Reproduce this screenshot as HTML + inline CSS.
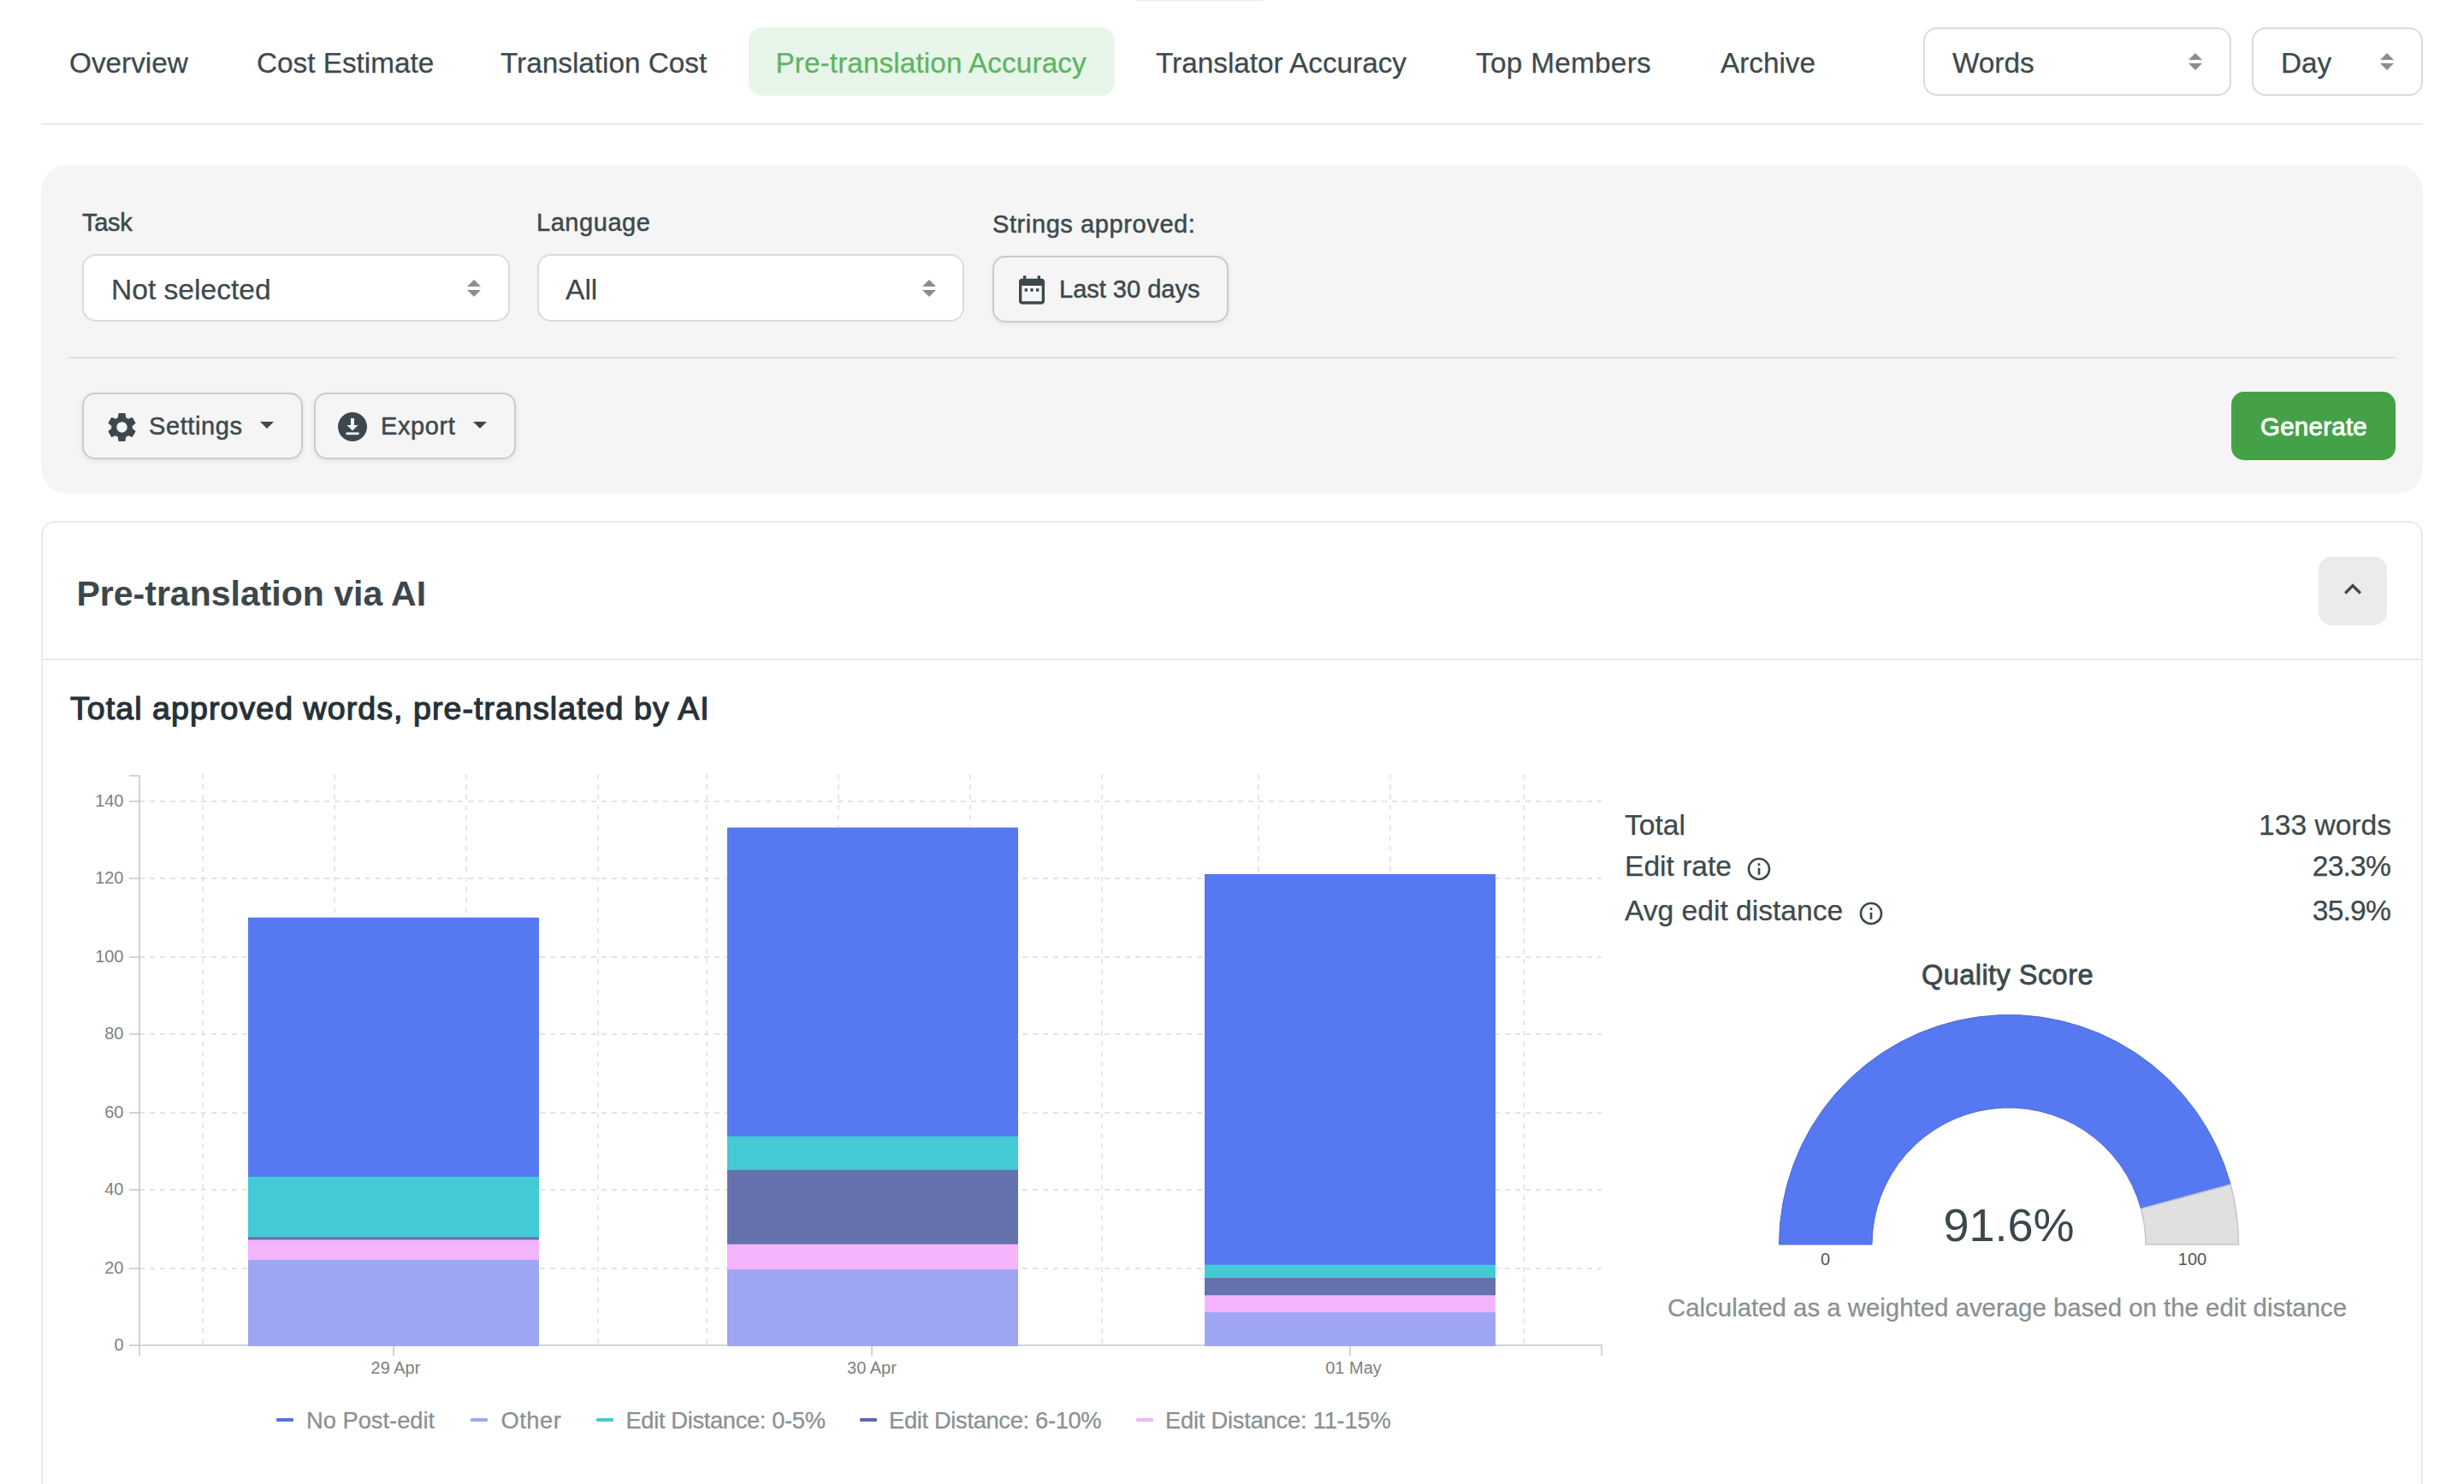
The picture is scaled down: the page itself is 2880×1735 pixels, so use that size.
<!DOCTYPE html>
<html lang="en">
<head>
<meta charset="utf-8">
<title>Pre-translation Accuracy</title>
<style>
html,body{margin:0;padding:0;background:#fff;}
body{width:2880px;height:1735px;position:relative;overflow:hidden;font-family:"Liberation Sans",sans-serif;color:#3d494d;}
@media (max-width:1500px){html{zoom:.5;}}
.abs{position:absolute;}
.t{position:absolute;white-space:nowrap;line-height:1;margin:0;font-weight:400;-webkit-text-stroke:0.25px currentColor;}
.tab{font-size:33.3px;top:57px;}
.med{-webkit-text-stroke:0.5px currentColor;letter-spacing:0.6px;}
.lg{font-size:27.3px;top:1647px;color:#8a9093;}
.mk{position:absolute;top:1658px;width:20px;height:4px;border-radius:1px;}
.box{position:absolute;box-sizing:border-box;}
.sel{background:#fff;border:2px solid #dbdbdb;border-radius:16px;}
.btn{background:#f5f5f5;border:2px solid #cbcbcb;border-radius:15px;box-shadow:0 2px 6px rgba(0,0,0,.07);}
.arr{position:absolute;width:16px;height:20px;}
</style>
</head>
<body>

<!-- top sliver -->
<div class="box" style="left:1328px;top:0;width:148px;height:1px;background:#ececec;"></div>

<!-- tabs -->
<div class="box" style="left:875px;top:32px;width:428px;height:80px;border-radius:16px;background:#e8f5e9;"></div>
<span class="t tab" id="tb1" style="left:81px;">Overview</span>
<span class="t tab" id="tb2" style="left:300px;">Cost Estimate</span>
<span class="t tab" id="tb3" style="left:585px;">Translation Cost</span>
<span class="t tab" id="tb4" style="left:906.5px;letter-spacing:0.1px;color:#5cb561;">Pre-translation Accuracy</span>
<span class="t tab" id="tb5" style="left:1351px;">Translator Accuracy</span>
<span class="t tab" id="tb6" style="left:1725px;letter-spacing:0.3px;">Top Members</span>
<span class="t tab" id="tb7" style="left:2011px;">Archive</span>

<div class="box sel" style="left:2248px;top:32px;width:360px;height:80px;"></div>
<span class="t tab" id="tb8" style="left:2282px;">Words</span>
<svg class="arr" style="left:2558px;top:62px;" viewBox="0 0 16 20"><path d="M8 0 L16 8 H0 Z M0 12 H16 L8 20 Z" fill="#8a8e90"/></svg>
<div class="box sel" style="left:2632px;top:32px;width:200px;height:80px;"></div>
<span class="t tab" id="tb9" style="left:2666px;">Day</span>
<svg class="arr" style="left:2782px;top:62px;" viewBox="0 0 16 20"><path d="M8 0 L16 8 H0 Z M0 12 H16 L8 20 Z" fill="#8a8e90"/></svg>

<div class="box" style="left:48px;top:144px;width:2784px;height:2px;background:#e8e8e8;"></div>

<!-- filter panel -->
<div class="box" style="left:48px;top:193px;width:2784px;height:384px;border-radius:30px;background:#f5f5f5;"></div>
<span class="t med" id="lb1" style="left:96px;top:246px;font-size:29px;letter-spacing:-0.3px;">Task</span>
<span class="t med" id="lb2" style="left:627px;top:246px;font-size:29px;letter-spacing:0.55px;">Language</span>
<span class="t med" id="lb3" style="left:1160px;top:248px;font-size:29px;">Strings approved:</span>

<div class="box sel" style="left:96px;top:297px;width:500px;height:79px;"></div>
<span class="t" id="sv1" style="left:130px;top:322px;font-size:33.6px;">Not selected</span>
<svg class="arr" style="left:546px;top:327px;" viewBox="0 0 16 20"><path d="M8 0 L16 8 H0 Z M0 12 H16 L8 20 Z" fill="#8a8e90"/></svg>
<div class="box sel" style="left:628px;top:297px;width:499px;height:79px;"></div>
<span class="t" id="sv2" style="left:661px;top:322px;font-size:33.6px;">All</span>
<svg class="arr" style="left:1078px;top:327px;" viewBox="0 0 16 20"><path d="M8 0 L16 8 H0 Z M0 12 H16 L8 20 Z" fill="#8a8e90"/></svg>

<div class="box btn" style="left:1160px;top:299px;width:276px;height:78px;"></div>
<svg class="abs" style="left:1186px;top:319px;width:40px;height:40px;" viewBox="0 0 24 24"><path fill="#3c484d" d="M9 11H7v2h2v-2zm4 0h-2v2h2v-2zm4 0h-2v2h2v-2zm2-7h-1V2h-2v2H8V2H6v2H5c-1.11 0-1.99.9-1.99 2L3 20c0 1.1.89 2 2 2h14c1.1 0 2-.9 2-2V6c0-1.1-.9-2-2-2zm0 16H5V9h14v11z"/></svg>
<span class="t med" id="bt1" style="left:1238px;top:324px;font-size:29px;letter-spacing:0;">Last 30 days</span>

<div class="box" style="left:80px;top:417px;width:2720px;height:2px;background:#dedede;"></div>

<div class="box btn" style="left:96px;top:459px;width:258px;height:78px;"></div>
<svg class="abs" style="left:121.5px;top:478.5px;width:41px;height:41px;" viewBox="0 0 24 24"><path fill="#3c484d" d="M19.14 12.94c.04-.3.06-.61.06-.94 0-.32-.02-.64-.07-.94l2.03-1.58a.49.49 0 0 0 .12-.61l-1.92-3.32a.488.488 0 0 0-.59-.22l-2.39.96c-.5-.38-1.03-.7-1.62-.94l-.36-2.54a.484.484 0 0 0-.48-.41h-3.84c-.24 0-.43.17-.47.41l-.36 2.54c-.59.24-1.13.57-1.62.94l-2.39-.96c-.22-.08-.47 0-.59.22L2.74 8.87c-.12.21-.08.47.12.61l2.03 1.58c-.05.3-.09.63-.09.94s.02.64.07.94l-2.03 1.58a.49.49 0 0 0-.12.61l1.92 3.32c.12.22.37.29.59.22l2.39-.96c.5.38 1.03.7 1.62.94l.36 2.54c.05.24.24.41.48.41h3.84c.24 0 .44-.17.47-.41l.36-2.54c.59-.24 1.13-.56 1.62-.94l2.39.96c.22.08.47 0 .59-.22l1.92-3.32c.12-.22.07-.47-.12-.61l-2.01-1.58zM12 15.6c-1.98 0-3.6-1.62-3.6-3.6s1.62-3.6 3.6-3.6 3.6 1.62 3.6 3.6-1.62 3.6-3.6 3.6z"/></svg>
<span class="t med" id="bt2" style="left:174px;top:484px;font-size:29px;">Settings</span>
<svg class="abs" style="left:304px;top:493px;width:16px;height:8px;" viewBox="0 0 16 8"><path d="M0 0H16L8 8Z" fill="#3c484d"/></svg>

<div class="box btn" style="left:367px;top:459px;width:236px;height:78px;"></div>
<svg class="abs" style="left:395px;top:482px;width:34px;height:34px;" viewBox="0 0 34 34"><circle cx="17" cy="17" r="17" fill="#3c484d"/><path d="M15 7h4v8h4.6L17 21.6 10.4 15H15z M9.5 23.5h15v2.8h-15z" fill="#f5f5f5"/></svg>
<span class="t med" id="bt3" style="left:445px;top:484px;font-size:29px;">Export</span>
<svg class="abs" style="left:553px;top:493px;width:16px;height:8px;" viewBox="0 0 16 8"><path d="M0 0H16L8 8Z" fill="#3c484d"/></svg>

<div class="box" style="left:2608px;top:458px;width:192px;height:80px;border-radius:15px;background:#44a148;"></div>
<span class="t" id="bt4" style="left:2642px;top:484px;font-size:29.5px;-webkit-text-stroke:0.9px currentColor;letter-spacing:0.25px;color:#fdfffd;">Generate</span>

<!-- card -->
<div class="box" style="left:48px;top:609px;width:2784px;height:1200px;border:2px solid #e9e9e9;border-radius:16px;background:#fff;"></div>
<span class="t" id="h1" style="-webkit-text-stroke:0;left:89.5px;top:674px;font-size:41px;font-weight:700;color:#3c474c;">Pre-translation via AI</span>
<div class="box" style="left:2710px;top:651px;width:80px;height:80px;border-radius:15px;background:#ebebeb;"></div>
<svg class="abs" style="left:2730px;top:669.3px;width:40px;height:40px;" viewBox="0 0 24 24"><path d="M12 8l-6 6 1.41 1.41L12 10.83l4.59 4.58L18 14z" fill="#3c484d"/></svg>
<div class="box" style="left:50px;top:770px;width:2780px;height:2px;background:#e8e8e8;"></div>
<span class="t" id="h2" style="left:82px;top:809.5px;font-size:37.5px;-webkit-text-stroke:1.25px currentColor;letter-spacing:1.08px;color:#263238;">Total approved words, pre-translated by AI</span>

<!-- CHART -->
<svg class="abs" id="chart" style="left:0;top:880px;width:1900px;height:855px;" viewBox="0 880 1900 855" font-family="Liberation Sans, sans-serif">
<line x1="237" y1="905" x2="237" y2="1572.8" stroke="#dcdcdc" stroke-width="1.3" stroke-dasharray="6 6"/>
<line x1="391" y1="905" x2="391" y2="1572.8" stroke="#dcdcdc" stroke-width="1.3" stroke-dasharray="6 6"/>
<line x1="545" y1="905" x2="545" y2="1572.8" stroke="#dcdcdc" stroke-width="1.3" stroke-dasharray="6 6"/>
<line x1="699" y1="905" x2="699" y2="1572.8" stroke="#dcdcdc" stroke-width="1.3" stroke-dasharray="6 6"/>
<line x1="826" y1="905" x2="826" y2="1572.8" stroke="#dcdcdc" stroke-width="1.3" stroke-dasharray="6 6"/>
<line x1="980" y1="905" x2="980" y2="1572.8" stroke="#dcdcdc" stroke-width="1.3" stroke-dasharray="6 6"/>
<line x1="1134" y1="905" x2="1134" y2="1572.8" stroke="#dcdcdc" stroke-width="1.3" stroke-dasharray="6 6"/>
<line x1="1288" y1="905" x2="1288" y2="1572.8" stroke="#dcdcdc" stroke-width="1.3" stroke-dasharray="6 6"/>
<line x1="1471" y1="905" x2="1471" y2="1572.8" stroke="#dcdcdc" stroke-width="1.3" stroke-dasharray="6 6"/>
<line x1="1625" y1="905" x2="1625" y2="1572.8" stroke="#dcdcdc" stroke-width="1.3" stroke-dasharray="6 6"/>
<line x1="1781" y1="905" x2="1781" y2="1572.8" stroke="#dcdcdc" stroke-width="1.3" stroke-dasharray="6 6"/>
<line x1="163" y1="1483.00" x2="1872" y2="1483.00" stroke="#dcdcdc" stroke-width="1.3" stroke-dasharray="6 6"/>
<line x1="163" y1="1391.00" x2="1872" y2="1391.00" stroke="#dcdcdc" stroke-width="1.3" stroke-dasharray="6 6"/>
<line x1="163" y1="1301.00" x2="1872" y2="1301.00" stroke="#dcdcdc" stroke-width="1.3" stroke-dasharray="6 6"/>
<line x1="163" y1="1209.00" x2="1872" y2="1209.00" stroke="#dcdcdc" stroke-width="1.3" stroke-dasharray="6 6"/>
<line x1="163" y1="1119.00" x2="1872" y2="1119.00" stroke="#dcdcdc" stroke-width="1.3" stroke-dasharray="6 6"/>
<line x1="163" y1="1027.00" x2="1872" y2="1027.00" stroke="#dcdcdc" stroke-width="1.3" stroke-dasharray="6 6"/>
<line x1="163" y1="937.00" x2="1872" y2="937.00" stroke="#dcdcdc" stroke-width="1.3" stroke-dasharray="6 6"/>
<path d="M151 907 H163 V1585" fill="none" stroke="#c6c6c6" stroke-width="1.5"/>
<path d="M151 1572.8 H1872 V1585" fill="none" stroke="#c6c6c6" stroke-width="1.5"/>
<line x1="151" y1="1483.00" x2="163" y2="1483.00" stroke="#c6c6c6" stroke-width="1.5"/>
<line x1="151" y1="1391.00" x2="163" y2="1391.00" stroke="#c6c6c6" stroke-width="1.5"/>
<line x1="151" y1="1301.00" x2="163" y2="1301.00" stroke="#c6c6c6" stroke-width="1.5"/>
<line x1="151" y1="1209.00" x2="163" y2="1209.00" stroke="#c6c6c6" stroke-width="1.5"/>
<line x1="151" y1="1119.00" x2="163" y2="1119.00" stroke="#c6c6c6" stroke-width="1.5"/>
<line x1="151" y1="1027.00" x2="163" y2="1027.00" stroke="#c6c6c6" stroke-width="1.5"/>
<line x1="151" y1="937.00" x2="163" y2="937.00" stroke="#c6c6c6" stroke-width="1.5"/>
<line x1="460" y1="1572.8" x2="460" y2="1585" stroke="#c6c6c6" stroke-width="1.5"/>
<line x1="1019" y1="1572.8" x2="1019" y2="1585" stroke="#c6c6c6" stroke-width="1.5"/>
<line x1="1578" y1="1572.8" x2="1578" y2="1585" stroke="#c6c6c6" stroke-width="1.5"/>
<rect x="290" y="1072.7" width="340" height="500.50" fill="#5678f1"/>
<rect x="290" y="1375.8" width="340" height="197.40" fill="#43cad4"/>
<rect x="290" y="1446.3" width="340" height="126.90" fill="#6672ad"/>
<rect x="290" y="1449.5" width="340" height="123.70" fill="#f3b4fb"/>
<rect x="290" y="1473" width="340" height="100.20" fill="#9ea6f3"/>
<rect x="850" y="967.5" width="340" height="605.70" fill="#5678f1"/>
<rect x="850" y="1328.5" width="340" height="244.70" fill="#43cad4"/>
<rect x="850" y="1367.8" width="340" height="205.40" fill="#6672ad"/>
<rect x="850" y="1454.7" width="340" height="118.50" fill="#f3b4fb"/>
<rect x="850" y="1484.2" width="340" height="89.00" fill="#9ea6f3"/>
<rect x="1408" y="1022" width="340" height="551.20" fill="#5678f1"/>
<rect x="1408" y="1478.7" width="340" height="94.50" fill="#43cad4"/>
<rect x="1408" y="1494" width="340" height="79.20" fill="#6672ad"/>
<rect x="1408" y="1514.3" width="340" height="58.90" fill="#f3b4fb"/>
<rect x="1408" y="1534.2" width="340" height="39.00" fill="#9ea6f3"/>
<text x="144.5" y="1579.30" text-anchor="end" font-size="20" fill="#7f7f7f">0</text>
<text x="144.5" y="1489.00" text-anchor="end" font-size="20" fill="#7f7f7f">20</text>
<text x="144.5" y="1397.00" text-anchor="end" font-size="20" fill="#7f7f7f">40</text>
<text x="144.5" y="1307.00" text-anchor="end" font-size="20" fill="#7f7f7f">60</text>
<text x="144.5" y="1215.00" text-anchor="end" font-size="20" fill="#7f7f7f">80</text>
<text x="144.5" y="1125.00" text-anchor="end" font-size="20" fill="#7f7f7f">100</text>
<text x="144.5" y="1033.00" text-anchor="end" font-size="20" fill="#7f7f7f">120</text>
<text x="144.5" y="943.00" text-anchor="end" font-size="20" fill="#7f7f7f">140</text>
<text x="462.5" y="1605.5" text-anchor="middle" font-size="20" fill="#7f7f7f">29 Apr</text>
<text x="1019" y="1605.5" text-anchor="middle" font-size="20" fill="#7f7f7f">30 Apr</text>
<text x="1582" y="1605.5" text-anchor="middle" font-size="20" fill="#7f7f7f">01 May</text>
</svg>

<!-- legend -->
<div class="mk" style="left:323px;background:#4f72ea;"></div><span class="t lg" id="lg1" style="left:358px;">No Post-edit</span>
<div class="mk" style="left:550px;background:#9ea6f3;"></div><span class="t lg" id="lg2" style="left:585.5px;letter-spacing:0.5px;">Other</span>
<div class="mk" style="left:697px;background:#43cad4;"></div><span class="t lg" id="lg3" style="left:731.5px;letter-spacing:-0.35px;">Edit Distance: 0-5%</span>
<div class="mk" style="left:1005px;background:#5c69a8;"></div><span class="t lg" id="lg4" style="left:1039px;letter-spacing:-0.33px;">Edit Distance: 6-10%</span>
<div class="mk" style="left:1328px;background:#f3b4fb;"></div><span class="t lg" id="lg5" style="left:1362px;letter-spacing:-0.22px;">Edit Distance: 11-15%</span>

<!-- RIGHT PANEL -->
<span class="t" id="s1" style="left:1899px;top:948px;font-size:33.6px;">Total</span>
<span class="t" id="s2" style="left:1899px;top:996px;font-size:33.6px;">Edit rate</span>
<span class="t" id="s3" style="left:1899px;top:1048px;font-size:33.6px;">Avg edit distance</span>
<svg class="abs" style="left:2040.25px;top:1000px;width:32px;height:32px;" viewBox="0 0 24 24"><path fill="#3c484d" d="M11 17h2v-6h-2v6zm1-15C6.48 2 2 6.48 2 12s4.48 10 10 10 10-4.48 10-10S17.52 2 12 2zm0 18c-4.41 0-8-3.59-8-8s3.59-8 8-8 8 3.59 8 8-3.59 8-8 8zM11 9h2V7h-2v2z"/></svg>
<svg class="abs" style="left:2171px;top:1052px;width:32px;height:32px;" viewBox="0 0 24 24"><path fill="#3c484d" d="M11 17h2v-6h-2v6zm1-15C6.48 2 2 6.48 2 12s4.48 10 10 10 10-4.48 10-10S17.52 2 12 2zm0 18c-4.41 0-8-3.59-8-8s3.59-8 8-8 8 3.59 8 8-3.59 8-8 8zM11 9h2V7h-2v2z"/></svg>
<span class="t" id="v1" style="right:85px;top:948px;font-size:33.6px;">133 words</span>
<span class="t" id="v2" style="letter-spacing:-0.8px;right:86px;top:996px;font-size:33.6px;">23.3%</span>
<span class="t" id="v3" style="letter-spacing:-0.8px;right:86px;top:1048px;font-size:33.6px;">35.9%</span>
<span class="t" id="qs" style="left:2246px;top:1124px;font-size:32.5px;-webkit-text-stroke:0.8px currentColor;letter-spacing:0.45px;">Quality Score</span>

<svg class="abs" id="gauge" style="left:1900px;top:980px;width:930px;height:600px;" viewBox="1900 980 930 600" font-family="Liberation Sans, sans-serif">
<path d="M2079.5 1455 A268.5 268.5 0 0 1 2607.20 1384.96 L2502.46 1413.27 A160 160 0 0 0 2188 1455 Z" fill="#5678f1" stroke="#4f6ad0" stroke-width="1"/>
<path d="M2607.20 1384.96 A268.5 268.5 0 0 1 2616.5 1455 L2508 1455 A160 160 0 0 0 2502.46 1413.27 Z" fill="#e0e0e0" stroke="#c6c6c6" stroke-width="1.5"/>
<text x="2348" y="1450.5" text-anchor="middle" font-size="54" fill="#3c484d">91.6%</text>
<text x="2133.5" y="1479" text-anchor="middle" font-size="20" fill="#555">0</text>
<text x="2562.5" y="1479" text-anchor="middle" font-size="20" fill="#555">100</text>
</svg>
<span class="t" id="cap" style="left:1949px;top:1514px;font-size:29.4px;color:#8a8f91;">Calculated as a weighted average based on the edit distance</span>

</body>
</html>
